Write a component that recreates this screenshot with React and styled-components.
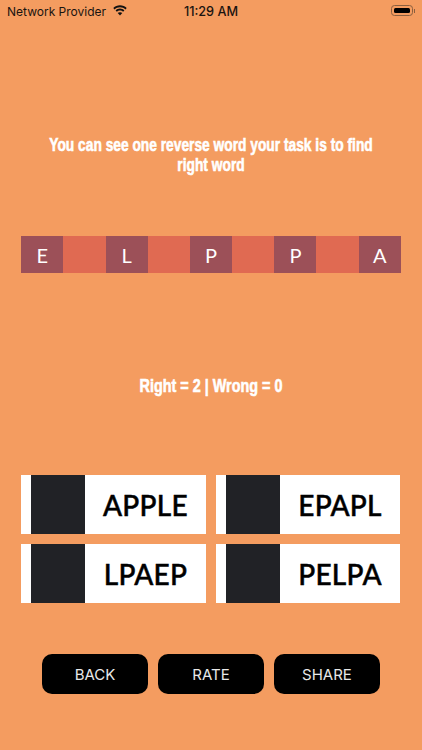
import React from 'react'
import styled, { createGlobalStyle } from 'styled-components'

const GlobalStyle = createGlobalStyle`
  html, body { margin: 0; padding: 0; background: #f49c60; }
  * { box-sizing: border-box; }
`

const letters = ['E', '', 'L', '', 'P', '', 'P', '', 'A']
const answers = ['APPLE', 'EPAPL', 'LPAEP', 'PELPA']
const actions = ['BACK', 'RATE', 'SHARE']

function App() {
  return (
    <Screen>
      <GlobalStyle />
      <StatusBar>
        <Carrier>
          Network Provider
          <svg width="16" height="11" viewBox="0 0 17 12" fill="#111">
            <path d="M8.5 2.4c2.3 0 4.4.9 6 2.4l1.3-1.4C13.9 1.5 11.3.4 8.5.4S3.1 1.5 1.2 3.4l1.3 1.4c1.6-1.5 3.7-2.4 6-2.4z" />
            <path d="M8.5 5.9c1.3 0 2.5.5 3.4 1.4l1.4-1.4c-1.3-1.2-3-2-4.8-2s-3.5.8-4.8 2l1.4 1.4c.9-.9 2.1-1.4 3.4-1.4z" />
            <path d="M8.5 11.4l2.5-2.6c-.6-.6-1.5-1-2.5-1s-1.9.4-2.5 1z" />
          </svg>
        </Carrier>
        <Clock>11:29 AM</Clock>
        <BatteryWrap>
          <Battery>
            <BatteryFill />
          </Battery>
          <BatteryCap />
        </BatteryWrap>
      </StatusBar>

      <Heading>You can see one reverse word your task is to find right word</Heading>

      <LetterRow>
        {letters.map((letter, i) => (
          <LetterCell key={i} $filled={i % 2 === 0}>{letter}</LetterCell>
        ))}
      </LetterRow>

      <Score>Right = 2 | Wrong = 0</Score>

      <AnswerGrid>
        {answers.map((word) => (
          <AnswerCard key={word}>
            <AnswerSwatch />
            <AnswerWord>{word}</AnswerWord>
          </AnswerCard>
        ))}
      </AnswerGrid>

      <ActionRow>
        {actions.map((label) => (
          <ActionButton key={label}>{label}</ActionButton>
        ))}
      </ActionRow>
    </Screen>
  )
}

export default App

const Screen = styled.main`
  width: 422px;
  height: 750px;
  overflow: hidden;
  display: flex;
  flex-direction: column;
  background: #f49c60;
`

const StatusBar = styled.header`
  height: 20px;
  padding: 2px 7px 0 7px;
  display: grid;
  grid-template-columns: 1fr auto 1fr;
  align-items: center;
  font-family: Inter, "Liberation Sans", sans-serif;
  font-size: 12px;
  color: #1a1410;
`

const Carrier = styled.div`
  display: flex;
  align-items: center;
  gap: 6px;
  white-space: nowrap;

  svg {
    margin-top: -1px;
  }
`

const Clock = styled.div`
  font-size: 12.7px;
  font-weight: 500;
`

const BatteryWrap = styled.div`
  justify-self: end;
  margin-top: -1px;
  display: flex;
  align-items: center;
  gap: 1px;
`

const Battery = styled.div`
  width: 22px;
  height: 11px;
  padding: 2px;
  border: 1px solid #8a5f3f;
  border-radius: 3.5px;
`

const BatteryCap = styled.div`
  width: 1px;
  height: 4px;
  background: #8a5f3f;
`

const BatteryFill = styled.div`
  height: 100%;
  background: #000;
  border-radius: 1.5px;
`

const Heading = styled.h1`
  align-self: center;
  flex: none;
  width: 450px;
  margin: 115px 0 0;
  font-family: "Liberation Sans", sans-serif;
  font-size: 18px;
  line-height: 20px;
  font-weight: 700;
  text-align: center;
  color: #fff;
  -webkit-text-stroke: 0.6px #fff;
  transform: scaleX(0.765);
`

const LetterRow = styled.div`
  margin: 61px 21.2px 0 21.3px;
  height: 37px;
  display: grid;
  grid-template-columns: repeat(9, 1fr);
`

const LetterCell = styled.div`
  display: flex;
  align-items: center;
  justify-content: center;
  font-family: Lato, "Open Sans", sans-serif;
  font-size: 20px;
  color: #fff;
  background: ${(p) => (p.$filled ? '#9c5058' : '#e06a52')};
`

const Score = styled.div`
  margin-top: 103px;
  font-family: "Liberation Sans", sans-serif;
  font-size: 18px;
  line-height: 20px;
  font-weight: 700;
  text-align: center;
  color: #fff;
  -webkit-text-stroke: 0.6px #fff;
  transform: scaleX(0.8);
`

const AnswerGrid = styled.div`
  margin: 79px 22px 0 21px;
  display: grid;
  grid-template-columns: 185px 184px;
  grid-auto-rows: 59px;
  column-gap: 10px;
  row-gap: 10px;
`

const AnswerCard = styled.button`
  padding: 0 0 0 10px;
  border: 0;
  display: flex;
  background: #fff;
`

const AnswerSwatch = styled.span`
  width: 54px;
  flex: none;
  background: #212226;
`

const AnswerWord = styled.span`
  flex: 1;
  align-self: center;
  text-align: center;
  font-family: Lato, "Open Sans", sans-serif;
  font-size: 28px;
  font-weight: 500;
  letter-spacing: 0.3px;
  color: #000;
  -webkit-text-stroke: 0.5px #000;
`

const ActionRow = styled.div`
  margin: 51px 42px 0;
  display: grid;
  grid-template-columns: repeat(3, 106px);
  column-gap: 10px;
`

const ActionButton = styled.button`
  height: 40px;
  padding: 0;
  border: 0;
  border-radius: 10px;
  background: #000;
  color: #e8e8e8;
  font-family: Inter, "Liberation Sans", sans-serif;
  font-size: 15px;
`
